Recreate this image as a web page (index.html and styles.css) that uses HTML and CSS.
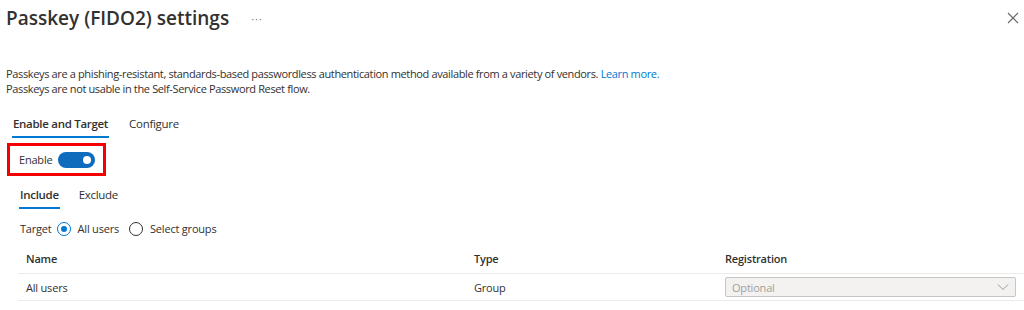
FILE: index.html
```html
<!DOCTYPE html>
<html lang="en">
<head>
    <meta charset="UTF-8">
    <title>Passkey (FIDO2) settings</title>
    <link rel="stylesheet" href="styles.css">
</head>
<body>
    <div class="blade">
        <!-- Header -->
        <header class="blade-header">
            <h1 class="blade-title">Passkey (FIDO2) settings</h1>
            <span class="more">&middot;&middot;&middot;</span>
            <button class="close" aria-label="Close">
                <svg width="12" height="12" viewBox="0 0 12 12"><path d="M1 1L11 11M11 1L1 11" stroke="#666" stroke-width="1.1" fill="none"/></svg>
            </button>
        </header>

        <p class="intro">
            Passkeys are a phishing-resistant, standards-based passwordless authentication method available from a variety of vendors. <a href="#">Learn more.</a><br>
            Passkeys are not usable in the Self-Service Password Reset flow.
        </p>

        <nav class="tabs">
            <a href="#" class="tab active">Enable and Target</a>
            <a href="#" class="tab">Configure</a>
        </nav>

        <div class="enable-box">
            <span>Enable</span>
            <span class="toggle"><span class="knob"></span></span>
        </div>

        <div class="inner">
            <nav class="tabs sub">
                <a href="#" class="tab active">Include</a>
                <a href="#" class="tab">Exclude</a>
            </nav>

            <div class="target-row">
                <span>Target</span>
                <label class="radio checked"><span class="dot"></span>All users</label>
                <label class="radio"><span class="dot"></span>Select groups</label>
            </div>

            <div class="grid">
                <div class="grid-row head">
                    <div>Name</div>
                    <div>Type</div>
                    <div>Registration</div>
                </div>
                <div class="grid-row">
                    <div>All users</div>
                    <div>Group</div>
                    <div>
                        <div class="select">
                            <span>Optional</span>
                            <svg width="12" height="8" viewBox="0 0 12 8"><path d="M1 1.5L6 6.5L11 1.5" stroke="#999" stroke-width="1" fill="none"/></svg>
                        </div>
                    </div>
                </div>
            </div>
        </div>
    </div>
</body>
</html>
```

FILE: styles.css
```css
body {
    margin: 0;
    font-family: "Open Sans", "Noto Sans", sans-serif;
    font-size: 11px;
    letter-spacing: -0.2px;
    color: #323130;
    background: #fff;
}

.blade {
    padding: 0 0 0 6px;
}

.blade-header {
    display: flex;
    align-items: center;
    height: 36px;
}

.blade-title {
    margin: 0;
    font-size: 19px;
    font-weight: 600;
    letter-spacing: 0;
}

.more {
    margin-left: 22px;
    color: #777;
    font-size: 11px;
    letter-spacing: 1px;
}

.close {
    margin-left: auto;
    margin-right: 4px;
    background: none;
    border: none;
    padding: 0;
    width: 14px;
    height: 14px;
    display: flex;
    align-items: center;
    justify-content: center;
}

.intro {
    margin: 30px 0 0;
    line-height: 15px;
    letter-spacing: -0.36px;
}

.intro a {
    color: #0078d4;
    text-decoration: none;
}

.tabs {
    display: flex;
    gap: 19px;
    margin-top: 17px;
    padding-left: 6px;
}

.tab {
    color: #323130;
    text-decoration: none;
    font-size: 11.5px;
    letter-spacing: -0.3px;
    padding: 3px 1px 5px;
    border-bottom: 2px solid transparent;
}

.tab.active {
    font-weight: 600;
    border-bottom-color: #0078d4;
}

.enable-box {
    box-sizing: border-box;
    display: flex;
    align-items: center;
    gap: 6px;
    width: 99px;
    height: 33px;
    margin: 5px 0 0 1px;
    padding: 0 0 0 9px;
    border: 3px solid #f50000;
}

.toggle {
    position: relative;
    width: 37px;
    height: 16px;
    border-radius: 8px;
    background: #0f6cbd;
}

.knob {
    position: absolute;
    right: 4px;
    top: 4px;
    width: 8px;
    height: 8px;
    border-radius: 50%;
    background: #fff;
}

.inner {
    padding-left: 8px;
}

.tabs.sub {
    margin-top: 8px;
    padding-left: 5px;
    gap: 18px;
}

.target-row {
    display: flex;
    align-items: center;
    margin-top: 12px;
    padding-left: 6px;
    gap: 5px;
}

.radio {
    display: flex;
    align-items: center;
    gap: 7px;
    margin-right: 5px;
}

.radio .dot {
    position: relative;
    width: 12px;
    height: 12px;
    border: 1px solid #323130;
    border-radius: 50%;
}

.radio.checked .dot {
    border-color: #0078d4;
}

.radio.checked .dot::after {
    content: "";
    position: absolute;
    left: 3px;
    top: 3px;
    width: 6px;
    height: 6px;
    border-radius: 50%;
    background: #0078d4;
}

.grid {
    margin-top: 7px;
    padding-left: 4px;
}

.grid-row {
    display: grid;
    grid-template-columns: 448px 251px 1fr;
    align-items: center;
    height: 26px;
    border-bottom: 1px solid #edebe9;
}

.grid-row > div {
    padding-left: 8px;
}

.grid-row.head {
    font-weight: 600;
    height: 30px;
}

.select {
    display: flex;
    align-items: center;
    justify-content: space-between;
    height: 18px;
    margin-right: 8px;
    padding: 0 6px;
    background: #f3f2f1;
    border: 1px solid #c8c6c4;
    border-radius: 2px;
    color: #a19f9d;
}
```
